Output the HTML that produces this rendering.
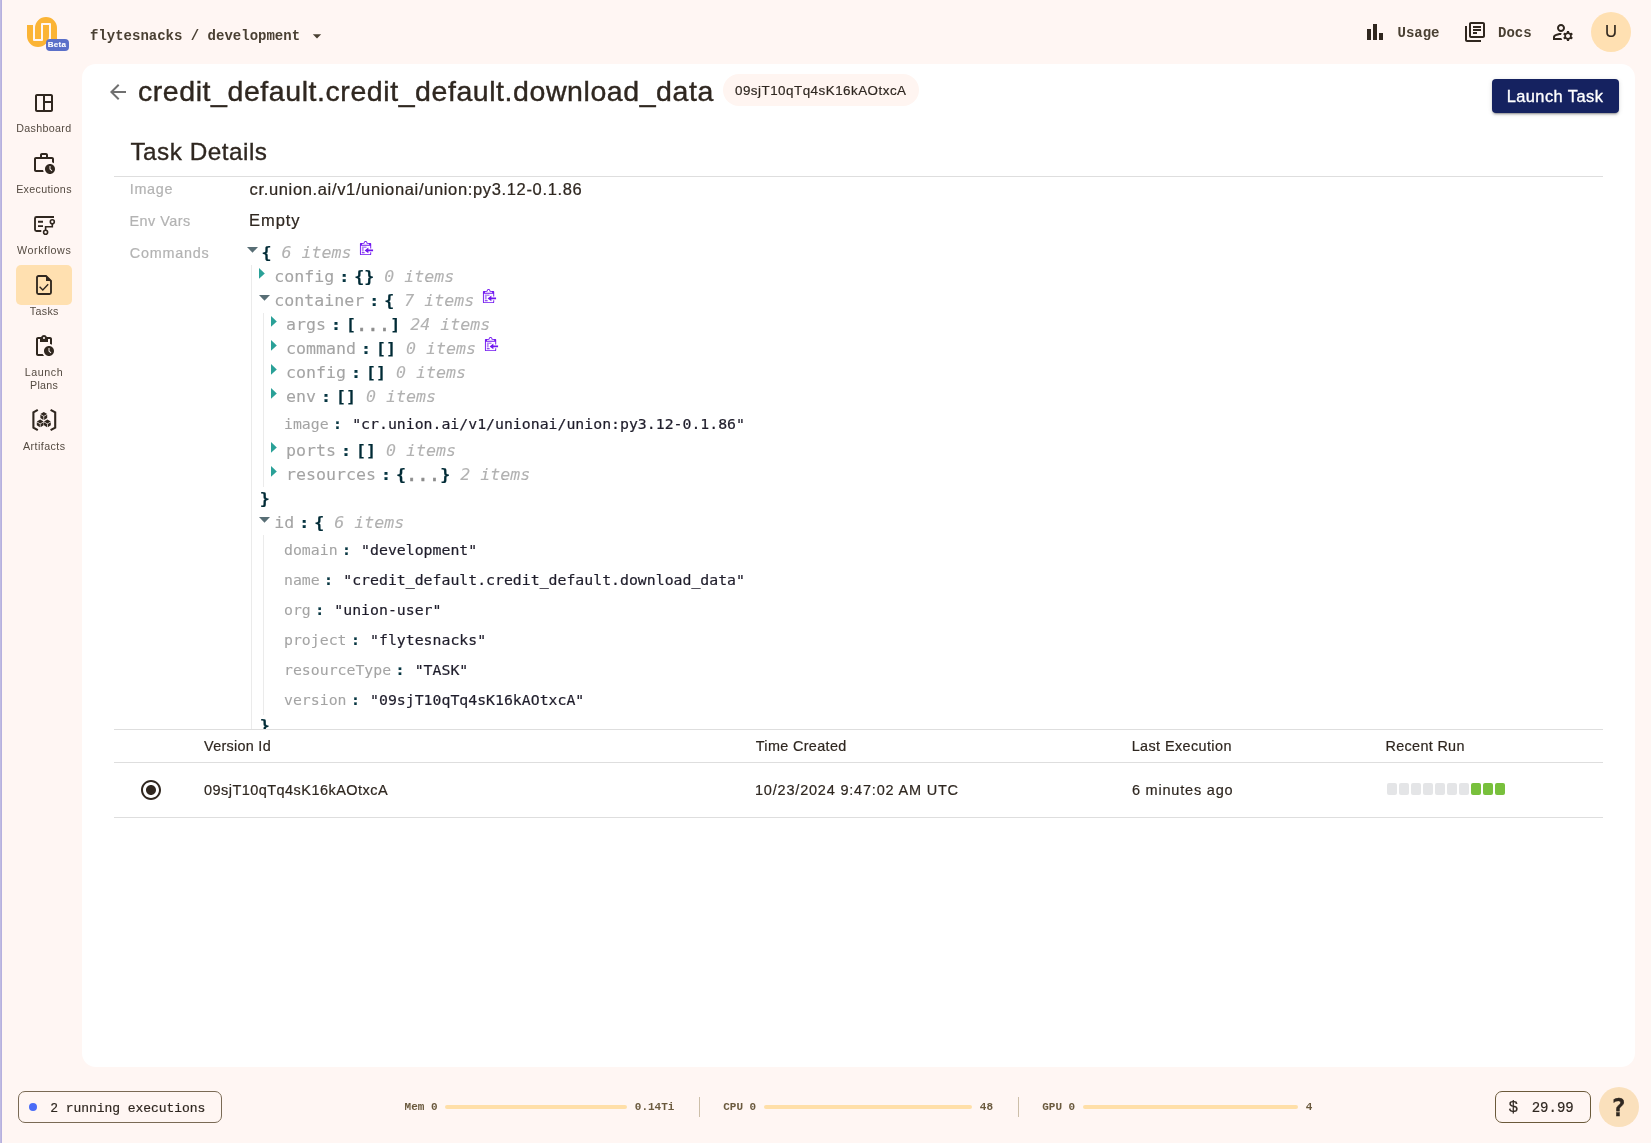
<!DOCTYPE html>
<html lang="en">
<head>
<meta charset="utf-8">
<title>Task Details</title>
<style>
*{box-sizing:border-box;margin:0;padding:0}
html,body{width:1651px;height:1143px;overflow:hidden}
body{background:#fff6f3;font-family:"Liberation Sans",sans-serif;color:#2f2720;position:relative}
.a{position:absolute}
.t{position:absolute;white-space:nowrap;-webkit-text-stroke:0.014em}
svg{position:absolute;overflow:visible}
.hl{position:absolute;height:1px;background:#dedede;left:114px;width:1489px}
.gl{position:absolute;width:1px;background:#ebebeb}
.blk{position:absolute;top:783px;width:10px;height:12px;border-radius:2px;background:#e4e5e7}
.bar{position:absolute;top:1105px;height:4px;border-radius:2px;background:#ffdfa8}
.sep{position:absolute;top:1097px;height:20px;width:1px;background:#cdbfa9}
</style>
</head>
<body>
<div id="app" style="position:absolute;left:0;top:0;width:1651px;height:1143px;will-change:transform">

<div class="a" style="left:0;top:0;width:2px;height:1143px;background:linear-gradient(90deg,#bfbae2 0,#bfbae2 50%,#b6b0de 50%)"></div>
<div class="a" style="left:82px;top:64px;width:1553px;height:1003px;background:#fff;border-radius:14px"></div>
<svg style="left:20px;top:10px" width="55" height="48" viewBox="20 10 55 48">
<path d="M27 25h6v15a1 1 0 0 0 1 1h8a1 1 0 0 0 1-1V25h6v11a11 11 0 0 1-22 0z" fill="#fbb435"/>
<path d="M35 39V28a11 11 0 0 1 22 0v11h-6V24a1 1 0 0 0-1-1h-8a1 1 0 0 0-1 1v15z" fill="#fbb435"/>
</svg>
<div class="a" style="left:46px;top:39px;width:23px;height:12px;border-radius:4px;background:#5b70c9"></div>
<span class="t" style="left:47.80px;top:41.13px;font-size:8px;line-height:8px;color:#fff;font-weight:bold;letter-spacing:0.3px">Beta</span>
<span class="t" style="left:90.00px;top:29.26px;font-size:14px;line-height:14px;color:#4a4033;font-family:'Liberation Mono',monospace;font-weight:bold;-webkit-text-stroke:0">flytesnacks / development</span>
<svg style="left:307px;top:25.5px" width="20" height="20" viewBox="0 0 24 24"><path d="M7 10l5 5 5-5z" fill="#4a4033"/></svg>
<svg style="left:1363px;top:20px" width="24" height="24" viewBox="0 0 24 24"><path d="M4 9h4v11H4zm12 4h4v7h-4zm-6-9h4v16h-4z" fill="#30271f"/></svg>
<span class="t" style="left:1397.50px;top:26.46px;font-size:14px;line-height:14px;color:#4a4033;font-family:'Liberation Mono',monospace;font-weight:bold;-webkit-text-stroke:0">Usage</span>
<svg style="left:1463px;top:20px" width="24" height="24" viewBox="0 0 24 24"><path d="M4 6H2v14c0 1.1.9 2 2 2h14v-2H4V6zm16-4H8c-1.1 0-2 .9-2 2v12c0 1.1.9 2 2 2h12c1.1 0 2-.9 2-2V4c0-1.1-.9-2-2-2zm0 14H8V4h12v12zM10 9h8v2h-8zm0 3h4v2h-4zm0-6h8v2h-8z" fill="#30271f"/></svg>
<span class="t" style="left:1498.00px;top:26.46px;font-size:14px;line-height:14px;color:#4a4033;font-family:'Liberation Mono',monospace;font-weight:bold;-webkit-text-stroke:0">Docs</span>
<svg style="left:1551px;top:20px" width="24" height="24" viewBox="0 0 24 24"><path d="M4 18v-.65c0-.34.16-.66.41-.81C6.1 15.53 8.03 15 10 15c.03 0 .05 0 .08.01.1-.7.3-1.37.59-1.98-.22-.02-.44-.03-.67-.03-2.42 0-4.680.67-6.610 1.820-.88.520-1.390 1.500-1.390 2.530V20h9.260c-.42-.6-.75-1.280-.97-2H4zm6-6c2.210 0 4-1.790 4-4s-1.790-4-4-4-4 1.790-4 4 1.790 4 4 4zm0-6c1.100 0 2 .9 2 2s-.9 2-2 2-2-.9-2-2 .9-2 2-2zm10.750 10c0-.22-.03-.42-.06-.63l1.140-1.010-1-1.730-1.450.49c-.32-.27-.68-.48-1.080-.63L18 11h-2l-.3 1.490c-.4.150-.76.360-1.080.630l-1.450-.49-1 1.730 1.140 1.010c-.03.210-.06.410-.06.630s.03.420.06.630l-1.140 1.010 1 1.730 1.450-.49c.32.270.68.480 1.080.630L16 21h2l.3-1.490c.4-.15.76-.36 1.080-.63l1.450.49 1-1.730-1.140-1.010c.03-.21.06-.41.06-.63zM17 18c-1.100 0-2-.9-2-2s.9-2 2-2 2 .9 2 2-.9 2-2 2z" fill="#30271f"/></svg>
<div class="a" style="left:1591px;top:12px;width:40px;height:40px;border-radius:50%;background:#ffe0b2"></div>
<span class="t" style="left:1604.90px;top:23.95px;font-size:16.6px;line-height:16.6px;color:#30271f">U</span>
<svg style="left:32px;top:90.5px" width="24" height="24" viewBox="0 0 24 24"><path d="M19 3H5c-1.100 0-2 .9-2 2v14c0 1.100.9 2 2 2h14c1.100 0 2-.9 2-2V5c0-1.100-.9-2-2-2zM5 19V5h6v14H5zm14 0h-6v-7h6v7zm0-9h-6V5h6v5z" fill="#30271f"/></svg>
<svg style="left:32px;top:151px" width="24" height="24" viewBox="0 0 24 24"><path d="M4 19V8h16v3.290c.72.220 1.400.540 2 .970V8c0-1.110-.89-2-2-2h-4V4c0-1.110-.89-2-2-2h-4c-1.110 0-2 .89-2 2v2H4c-1.110 0-2 .89-2 2v11c0 1.110.89 2 2 2h7.680c-.3-.62-.5-1.290-.6-2H4zm6-15h4v2h-4V4z" fill="#30271f"/><path d="M18 13c-2.760 0-5 2.240-5 5s2.240 5 5 5 5-2.240 5-5-2.240-5-5-5zm1.650 7.350L17.500 18.200V15h1v2.790l1.850 1.850-.7.710z" fill="#30271f"/></svg>
<svg style="left:32px;top:212px" width="24" height="24" viewBox="0 0 24 24" fill="none" stroke="#30271f">
<path d="M22 5H4.500A1.500 1.500 0 0 0 3 6.500v11A1.500 1.500 0 0 0 4.500 19H9.300" stroke-width="1.850"/>
<path d="M6 9.750h5M6 14.100h5" stroke-width="1.800"/>
<circle cx="20.300" cy="9.700" r="2" stroke-width="1.600"/><circle cx="13.600" cy="20.200" r="2" stroke-width="1.600"/>
<path d="M20.300 11.700v3.100h-6.700v3.400" stroke-width="1.600"/></svg>
<div class="a" style="left:16px;top:265px;width:56px;height:40px;border-radius:5px;background:#ffe0b0"></div>
<svg style="left:32px;top:273px" width="24" height="24" viewBox="0 0 24 24" fill="none" stroke="#30271f">
<path d="M14 3H6.500A1.500 1.500 0 0 0 5 4.500v15A1.500 1.500 0 0 0 6.500 21h11a1.500 1.500 0 0 0 1.500-1.500V8z" stroke-width="1.850" stroke-linejoin="round"/>
<path d="M14 2.500V8h5.500z" fill="#30271f" stroke="none"/>
<path d="M7.600 13.700l3.200 3.200 5.400-5.600" stroke-width="1.400"/></svg>
<svg style="left:31.5px;top:334px" width="24" height="24" viewBox="0 0 24 24"><path d="M17 12c-2.760 0-5 2.240-5 5s2.240 5 5 5 5-2.240 5-5-2.240-5-5-5zm1.650 7.350L16.500 17.200V14h1v2.790l1.850 1.850-.7.710zM18 3h-3.180C14.400 1.840 13.300 1 12 1s-2.400.84-2.820 2H6c-1.100 0-2 .9-2 2v15c0 1.100.9 2 2 2h6.110c-.59-.57-1.070-1.250-1.420-2H6V5h2v3h8V5h2v5.080c.71.100 1.380.31 2 .6V5c0-1.100-.9-2-2-2zm-6 2c-.55 0-1-.45-1-1s.45-1 1-1 1 .45 1 1-.45 1-1 1z" fill="#30271f"/></svg>
<svg style="left:30px;top:406px" width="28" height="28" viewBox="30 406 28 28">
<path d="M37.800 409.800L33.400 412.400V427.600L37.800 430.200M50.600 409.800L55.200 412.400V427.600L50.600 430.200" fill="none" stroke="#30271f" stroke-width="2.100"/>
<path d="M43.8 412.06L47.20 414.03L43.8 416.00L40.40 414.03zM40.40 414.73L43.45 416.60V419.94L40.40 417.97zM47.20 414.73L44.15 416.60V419.94L47.20 417.97zM40.2 419.46L43.60 421.43L40.2 423.40L36.80 421.43zM36.80 422.13L39.85 424.00V427.34L36.80 425.37zM43.60 422.13L40.55 424.00V427.34L43.60 425.37zM47.4 419.46L50.80 421.43L47.4 423.40L44.00 421.43zM44.00 422.13L47.05 424.00V427.34L44.00 425.37zM50.80 422.13L47.75 424.00V427.34L50.80 425.37z" fill="#30271f"/></svg>
<span class="t" style="left:16.15px;top:122.64px;font-size:10.7px;line-height:10.7px;color:#544a41;letter-spacing:0.35px;-webkit-text-stroke:0">Dashboard</span>
<span class="t" style="left:16.15px;top:183.84px;font-size:10.7px;line-height:10.7px;color:#544a41;letter-spacing:0.339px;-webkit-text-stroke:0">Executions</span>
<span class="t" style="left:17.10px;top:244.74px;font-size:10.7px;line-height:10.7px;color:#544a41;letter-spacing:0.569px;-webkit-text-stroke:0">Workflows</span>
<span class="t" style="left:29.75px;top:305.74px;font-size:10.7px;line-height:10.7px;color:#544a41;letter-spacing:0.338px;-webkit-text-stroke:0">Tasks</span>
<span class="t" style="left:24.85px;top:366.74px;font-size:10.7px;line-height:10.7px;color:#544a41;letter-spacing:0.55px;-webkit-text-stroke:0">Launch</span>
<span class="t" style="left:30.05px;top:379.64px;font-size:10.7px;line-height:10.7px;color:#544a41;letter-spacing:0.237px;-webkit-text-stroke:0">Plans</span>
<span class="t" style="left:22.90px;top:440.74px;font-size:10.7px;line-height:10.7px;color:#544a41;letter-spacing:0.456px;-webkit-text-stroke:0">Artifacts</span>
<svg style="left:106.2px;top:80px" width="24" height="24" viewBox="0 0 24 24"><path d="M20 11H7.830l5.590-5.590L12 4l-8 8 8 8 1.410-1.410L7.830 13H20v-2z" fill="#707070"/></svg>
<span class="t" style="left:137.95px;top:77.17px;font-size:28.5px;line-height:28.5px;color:#2f2720;letter-spacing:0.57px">credit_default.credit_default.download_data</span>
<div class="a" style="left:723px;top:74px;width:196px;height:32px;border-radius:16px;background:#fff5f1"></div>
<span class="t" style="left:735.00px;top:84.06px;font-size:13.4px;line-height:13.4px;color:#2f2720;letter-spacing:0.488px">09sjT10qTq4sK16kAOtxcA</span>
<div class="a" style="left:1492px;top:79px;width:127px;height:34px;border-radius:4px;background:#152260;box-shadow:0 3px 1px -2px rgba(0,0,0,.2),0 2px 2px 0 rgba(0,0,0,.14),0 1px 5px 0 rgba(0,0,0,.12)"></div>
<span class="t" style="left:1506.65px;top:88.12px;font-size:16.4px;line-height:16.4px;color:#fff;letter-spacing:0.45px;-webkit-text-stroke:0.35px #fff">Launch Task</span>
<span class="t" style="left:130.40px;top:140.03px;font-size:24.3px;line-height:24.3px;color:#2f2720;letter-spacing:0.514px">Task Details</span>
<div class="hl" style="top:176px"></div>
<span class="t" style="left:129.65px;top:182.11px;font-size:14.4px;line-height:14.4px;color:#b3b3b3;letter-spacing:0.737px">Image</span>
<span class="t" style="left:129.50px;top:214.01px;font-size:14.4px;line-height:14.4px;color:#b3b3b3;letter-spacing:0.5px">Env Vars</span>
<span class="t" style="left:129.75px;top:245.81px;font-size:14.4px;line-height:14.4px;color:#b3b3b3;letter-spacing:0.764px">Commands</span>
<span class="t" style="left:249.55px;top:180.63px;font-size:16.5px;line-height:16.5px;color:#2f2720;letter-spacing:0.651px">cr.union.ai/v1/unionai/union:py3.12-0.1.86</span>
<span class="t" style="left:249.05px;top:212.43px;font-size:16.5px;line-height:16.5px;color:#2f2720;letter-spacing:0.925px">Empty</span>
<div class="a" style="left:240px;top:232px;width:700px;height:497px;overflow:hidden"><div class="a" style="left:-240px;top:-232px;width:1651px;height:1143px">
<svg style="left:247.3px;top:246.7px" width="11" height="6" viewBox="0 0 11 6"><path d="M0 0H11L5.500 5.800z" fill="#586e75"/></svg>
<span class="t" style="left:261.50px;top:244.60px;font-size:16.61px;line-height:16.61px;color:#002b36;font-family:'DejaVu Sans Mono','Liberation Mono',monospace;font-weight:bold">{</span>
<span class="t" style="left:281.50px;top:244.60px;font-size:16.61px;line-height:16.61px;color:rgba(0,0,0,0.3);font-family:'DejaVu Sans Mono','Liberation Mono',monospace;font-style:italic;-webkit-text-stroke:0.006em">6 items</span>
<svg style="left:359.1px;top:241.1px" width="15" height="15" viewBox="0 0 40 40"><path d="m30 35h-25v-22.500h25v7.500h2.500v-12.500c0-1.400-1.100-2.500-2.500-2.500h-7.500c0-2.800-2.200-5-5-5s-5 2.200-5 5h-7.500c-1.400 0-2.500 1.100-2.500 2.500v27.500c0 1.400 1.100 2.500 2.500 2.500h25c1.400 0 2.500-1.100 2.500-2.500v-5h-2.500v5z m-20-27.500h2.500s2.500-1.100 2.500-2.500 1.100-2.500 2.500-2.500 2.500 1.100 2.500 2.500 1.300 2.500 2.500 2.500h2.500s2.500 1.100 2.500 2.500h-20c0-1.500 1.100-2.500 2.500-2.500z m-2.500 20h5v-2.500h-5v2.500z m17.500-5v-5l-10 7.500 10 7.500v-5h12.500v-5h-12.500z m-17.500 10h7.500v-2.500h-7.500v2.500z m12.500-17.500h-12.500v2.500h12.500v-2.500z m-7.500 5h-5v2.500h5v-2.500z" fill="#7016f0" fill-rule="evenodd"/></svg>
<svg style="left:259.1px;top:268.09999999999997px" width="6" height="11" viewBox="0 0 6 11"><path d="M0 0L5.800 5.400L0 10.800z" fill="#2aa198"/></svg>
<span class="t" style="left:274.20px;top:268.60px;font-size:16.61px;line-height:16.61px;color:#a4a4a4;font-family:'DejaVu Sans Mono','Liberation Mono',monospace;-webkit-text-stroke:0.006em">config</span>
<span class="t" style="left:339.20px;top:268.60px;font-size:16.61px;line-height:16.61px;color:#073642;font-family:'DejaVu Sans Mono','Liberation Mono',monospace;font-weight:bold">:</span>
<span class="t" style="left:354.20px;top:268.60px;font-size:16.61px;line-height:16.61px;color:#002b36;font-family:'DejaVu Sans Mono','Liberation Mono',monospace;font-weight:bold">{}</span>
<span class="t" style="left:384.20px;top:268.60px;font-size:16.61px;line-height:16.61px;color:rgba(0,0,0,0.3);font-family:'DejaVu Sans Mono','Liberation Mono',monospace;font-style:italic;-webkit-text-stroke:0.006em">0 items</span>
<svg style="left:259.4px;top:294.7px" width="11" height="6" viewBox="0 0 11 6"><path d="M0 0H11L5.500 5.800z" fill="#586e75"/></svg>
<span class="t" style="left:274.20px;top:292.60px;font-size:16.61px;line-height:16.61px;color:#a4a4a4;font-family:'DejaVu Sans Mono','Liberation Mono',monospace;-webkit-text-stroke:0.006em">container</span>
<span class="t" style="left:369.20px;top:292.60px;font-size:16.61px;line-height:16.61px;color:#073642;font-family:'DejaVu Sans Mono','Liberation Mono',monospace;font-weight:bold">:</span>
<span class="t" style="left:384.20px;top:292.60px;font-size:16.61px;line-height:16.61px;color:#002b36;font-family:'DejaVu Sans Mono','Liberation Mono',monospace;font-weight:bold">{</span>
<span class="t" style="left:404.20px;top:292.60px;font-size:16.61px;line-height:16.61px;color:rgba(0,0,0,0.3);font-family:'DejaVu Sans Mono','Liberation Mono',monospace;font-style:italic;-webkit-text-stroke:0.006em">7 items</span>
<svg style="left:481.8px;top:289.1px" width="15" height="15" viewBox="0 0 40 40"><path d="m30 35h-25v-22.500h25v7.500h2.500v-12.500c0-1.400-1.100-2.500-2.500-2.500h-7.500c0-2.800-2.200-5-5-5s-5 2.200-5 5h-7.500c-1.400 0-2.500 1.100-2.500 2.500v27.500c0 1.400 1.100 2.500 2.500 2.500h25c1.400 0 2.500-1.100 2.500-2.500v-5h-2.500v5z m-20-27.500h2.500s2.500-1.100 2.500-2.500 1.100-2.500 2.500-2.500 2.500 1.100 2.500 2.500 1.300 2.500 2.500 2.500h2.500s2.500 1.100 2.500 2.500h-20c0-1.500 1.100-2.500 2.500-2.500z m-2.500 20h5v-2.500h-5v2.500z m17.500-5v-5l-10 7.500 10 7.500v-5h12.500v-5h-12.500z m-17.500 10h7.500v-2.500h-7.500v2.500z m12.500-17.500h-12.500v2.500h12.500v-2.500z m-7.500 5h-5v2.500h5v-2.500z" fill="#7016f0" fill-rule="evenodd"/></svg>
<svg style="left:271.2px;top:316.09999999999997px" width="6" height="11" viewBox="0 0 6 11"><path d="M0 0L5.800 5.400L0 10.800z" fill="#2aa198"/></svg>
<span class="t" style="left:286.00px;top:316.60px;font-size:16.61px;line-height:16.61px;color:#a4a4a4;font-family:'DejaVu Sans Mono','Liberation Mono',monospace;-webkit-text-stroke:0.006em">args</span>
<span class="t" style="left:331.00px;top:316.60px;font-size:16.61px;line-height:16.61px;color:#073642;font-family:'DejaVu Sans Mono','Liberation Mono',monospace;font-weight:bold">:</span>
<span class="t" style="left:346.00px;top:316.60px;font-size:16.61px;line-height:16.61px;color:#002b36;font-family:'DejaVu Sans Mono','Liberation Mono',monospace;font-weight:bold">[</span>
<span class="t" style="left:356.00px;top:314.66px;font-size:18.9px;line-height:18.9px;color:#8c8c8c;font-family:'DejaVu Sans Mono','Liberation Mono',monospace;-webkit-text-stroke:0.55px">...</span>
<span class="t" style="left:390.20px;top:316.60px;font-size:16.61px;line-height:16.61px;color:#002b36;font-family:'DejaVu Sans Mono','Liberation Mono',monospace;font-weight:bold">]</span>
<span class="t" style="left:410.20px;top:316.60px;font-size:16.61px;line-height:16.61px;color:rgba(0,0,0,0.3);font-family:'DejaVu Sans Mono','Liberation Mono',monospace;font-style:italic;-webkit-text-stroke:0.006em">24 items</span>
<svg style="left:271.2px;top:340.09999999999997px" width="6" height="11" viewBox="0 0 6 11"><path d="M0 0L5.800 5.400L0 10.800z" fill="#2aa198"/></svg>
<span class="t" style="left:286.00px;top:340.60px;font-size:16.61px;line-height:16.61px;color:#a4a4a4;font-family:'DejaVu Sans Mono','Liberation Mono',monospace;-webkit-text-stroke:0.006em">command</span>
<span class="t" style="left:361.00px;top:340.60px;font-size:16.61px;line-height:16.61px;color:#073642;font-family:'DejaVu Sans Mono','Liberation Mono',monospace;font-weight:bold">:</span>
<span class="t" style="left:376.00px;top:340.60px;font-size:16.61px;line-height:16.61px;color:#002b36;font-family:'DejaVu Sans Mono','Liberation Mono',monospace;font-weight:bold">[]</span>
<span class="t" style="left:406.00px;top:340.60px;font-size:16.61px;line-height:16.61px;color:rgba(0,0,0,0.3);font-family:'DejaVu Sans Mono','Liberation Mono',monospace;font-style:italic;-webkit-text-stroke:0.006em">0 items</span>
<svg style="left:483.6px;top:337.1px" width="15" height="15" viewBox="0 0 40 40"><path d="m30 35h-25v-22.500h25v7.500h2.500v-12.500c0-1.400-1.100-2.500-2.500-2.500h-7.500c0-2.800-2.200-5-5-5s-5 2.200-5 5h-7.500c-1.400 0-2.500 1.100-2.500 2.500v27.500c0 1.400 1.100 2.500 2.500 2.500h25c1.400 0 2.500-1.100 2.500-2.500v-5h-2.500v5z m-20-27.500h2.500s2.500-1.100 2.500-2.500 1.100-2.500 2.500-2.500 2.500 1.100 2.500 2.500 1.300 2.500 2.500 2.500h2.500s2.500 1.100 2.500 2.500h-20c0-1.500 1.100-2.500 2.500-2.500z m-2.500 20h5v-2.500h-5v2.500z m17.500-5v-5l-10 7.500 10 7.500v-5h12.500v-5h-12.500z m-17.500 10h7.500v-2.500h-7.500v2.500z m12.500-17.500h-12.500v2.500h12.500v-2.500z m-7.500 5h-5v2.500h5v-2.500z" fill="#7016f0" fill-rule="evenodd"/></svg>
<svg style="left:271.2px;top:364.09999999999997px" width="6" height="11" viewBox="0 0 6 11"><path d="M0 0L5.800 5.400L0 10.800z" fill="#2aa198"/></svg>
<span class="t" style="left:286.00px;top:364.60px;font-size:16.61px;line-height:16.61px;color:#a4a4a4;font-family:'DejaVu Sans Mono','Liberation Mono',monospace;-webkit-text-stroke:0.006em">config</span>
<span class="t" style="left:351.00px;top:364.60px;font-size:16.61px;line-height:16.61px;color:#073642;font-family:'DejaVu Sans Mono','Liberation Mono',monospace;font-weight:bold">:</span>
<span class="t" style="left:366.00px;top:364.60px;font-size:16.61px;line-height:16.61px;color:#002b36;font-family:'DejaVu Sans Mono','Liberation Mono',monospace;font-weight:bold">[]</span>
<span class="t" style="left:396.00px;top:364.60px;font-size:16.61px;line-height:16.61px;color:rgba(0,0,0,0.3);font-family:'DejaVu Sans Mono','Liberation Mono',monospace;font-style:italic;-webkit-text-stroke:0.006em">0 items</span>
<svg style="left:271.2px;top:388.09999999999997px" width="6" height="11" viewBox="0 0 6 11"><path d="M0 0L5.800 5.400L0 10.800z" fill="#2aa198"/></svg>
<span class="t" style="left:286.00px;top:388.60px;font-size:16.61px;line-height:16.61px;color:#a4a4a4;font-family:'DejaVu Sans Mono','Liberation Mono',monospace;-webkit-text-stroke:0.006em">env</span>
<span class="t" style="left:321.00px;top:388.60px;font-size:16.61px;line-height:16.61px;color:#073642;font-family:'DejaVu Sans Mono','Liberation Mono',monospace;font-weight:bold">:</span>
<span class="t" style="left:336.00px;top:388.60px;font-size:16.61px;line-height:16.61px;color:#002b36;font-family:'DejaVu Sans Mono','Liberation Mono',monospace;font-weight:bold">[]</span>
<span class="t" style="left:366.00px;top:388.60px;font-size:16.61px;line-height:16.61px;color:rgba(0,0,0,0.3);font-family:'DejaVu Sans Mono','Liberation Mono',monospace;font-style:italic;-webkit-text-stroke:0.006em">0 items</span>
<span class="t" style="left:284.00px;top:417.10px;font-size:14.83px;line-height:14.83px;color:#a4a4a4;font-family:'DejaVu Sans Mono','Liberation Mono',monospace;-webkit-text-stroke:0.006em">image</span>
<span class="t" style="left:333.05px;top:417.10px;font-size:14.83px;line-height:14.83px;color:#073642;font-family:'DejaVu Sans Mono','Liberation Mono',monospace;font-weight:bold">:</span>
<span class="t" style="left:352.18px;top:417.10px;font-size:14.83px;line-height:14.83px;color:#1f1d2b;font-family:'DejaVu Sans Mono','Liberation Mono',monospace">&quot;cr.union.ai/v1/unionai/union:py3.12-0.1.86&quot;</span>
<svg style="left:271.2px;top:442.0px" width="6" height="11" viewBox="0 0 6 11"><path d="M0 0L5.800 5.400L0 10.800z" fill="#2aa198"/></svg>
<span class="t" style="left:286.00px;top:442.50px;font-size:16.61px;line-height:16.61px;color:#a4a4a4;font-family:'DejaVu Sans Mono','Liberation Mono',monospace;-webkit-text-stroke:0.006em">ports</span>
<span class="t" style="left:341.00px;top:442.50px;font-size:16.61px;line-height:16.61px;color:#073642;font-family:'DejaVu Sans Mono','Liberation Mono',monospace;font-weight:bold">:</span>
<span class="t" style="left:356.00px;top:442.50px;font-size:16.61px;line-height:16.61px;color:#002b36;font-family:'DejaVu Sans Mono','Liberation Mono',monospace;font-weight:bold">[]</span>
<span class="t" style="left:386.00px;top:442.50px;font-size:16.61px;line-height:16.61px;color:rgba(0,0,0,0.3);font-family:'DejaVu Sans Mono','Liberation Mono',monospace;font-style:italic;-webkit-text-stroke:0.006em">0 items</span>
<svg style="left:271.2px;top:466.0px" width="6" height="11" viewBox="0 0 6 11"><path d="M0 0L5.800 5.400L0 10.800z" fill="#2aa198"/></svg>
<span class="t" style="left:286.00px;top:466.50px;font-size:16.61px;line-height:16.61px;color:#a4a4a4;font-family:'DejaVu Sans Mono','Liberation Mono',monospace;-webkit-text-stroke:0.006em">resources</span>
<span class="t" style="left:381.00px;top:466.50px;font-size:16.61px;line-height:16.61px;color:#073642;font-family:'DejaVu Sans Mono','Liberation Mono',monospace;font-weight:bold">:</span>
<span class="t" style="left:396.00px;top:466.50px;font-size:16.61px;line-height:16.61px;color:#002b36;font-family:'DejaVu Sans Mono','Liberation Mono',monospace;font-weight:bold">{</span>
<span class="t" style="left:406.00px;top:464.56px;font-size:18.9px;line-height:18.9px;color:#8c8c8c;font-family:'DejaVu Sans Mono','Liberation Mono',monospace;-webkit-text-stroke:0.55px">...</span>
<span class="t" style="left:440.20px;top:466.50px;font-size:16.61px;line-height:16.61px;color:#002b36;font-family:'DejaVu Sans Mono','Liberation Mono',monospace;font-weight:bold">}</span>
<span class="t" style="left:460.20px;top:466.50px;font-size:16.61px;line-height:16.61px;color:rgba(0,0,0,0.3);font-family:'DejaVu Sans Mono','Liberation Mono',monospace;font-style:italic;-webkit-text-stroke:0.006em">2 items</span>
<span class="t" style="left:259.80px;top:490.50px;font-size:16.61px;line-height:16.61px;color:#002b36;font-family:'DejaVu Sans Mono','Liberation Mono',monospace;font-weight:bold">}</span>
<svg style="left:259.4px;top:516.6px" width="11" height="6" viewBox="0 0 11 6"><path d="M0 0H11L5.500 5.800z" fill="#586e75"/></svg>
<span class="t" style="left:274.20px;top:514.50px;font-size:16.61px;line-height:16.61px;color:#a4a4a4;font-family:'DejaVu Sans Mono','Liberation Mono',monospace;-webkit-text-stroke:0.006em">id</span>
<span class="t" style="left:299.20px;top:514.50px;font-size:16.61px;line-height:16.61px;color:#073642;font-family:'DejaVu Sans Mono','Liberation Mono',monospace;font-weight:bold">:</span>
<span class="t" style="left:314.20px;top:514.50px;font-size:16.61px;line-height:16.61px;color:#002b36;font-family:'DejaVu Sans Mono','Liberation Mono',monospace;font-weight:bold">{</span>
<span class="t" style="left:334.20px;top:514.50px;font-size:16.61px;line-height:16.61px;color:rgba(0,0,0,0.3);font-family:'DejaVu Sans Mono','Liberation Mono',monospace;font-style:italic;-webkit-text-stroke:0.006em">6 items</span>
<span class="t" style="left:284.00px;top:542.90px;font-size:14.83px;line-height:14.83px;color:#a4a4a4;font-family:'DejaVu Sans Mono','Liberation Mono',monospace;-webkit-text-stroke:0.006em">domain</span>
<span class="t" style="left:341.98px;top:542.90px;font-size:14.83px;line-height:14.83px;color:#073642;font-family:'DejaVu Sans Mono','Liberation Mono',monospace;font-weight:bold">:</span>
<span class="t" style="left:361.11px;top:542.90px;font-size:14.83px;line-height:14.83px;color:#1f1d2b;font-family:'DejaVu Sans Mono','Liberation Mono',monospace">&quot;development&quot;</span>
<span class="t" style="left:284.00px;top:572.90px;font-size:14.83px;line-height:14.83px;color:#a4a4a4;font-family:'DejaVu Sans Mono','Liberation Mono',monospace;-webkit-text-stroke:0.006em">name</span>
<span class="t" style="left:324.12px;top:572.90px;font-size:14.83px;line-height:14.83px;color:#073642;font-family:'DejaVu Sans Mono','Liberation Mono',monospace;font-weight:bold">:</span>
<span class="t" style="left:343.25px;top:572.90px;font-size:14.83px;line-height:14.83px;color:#1f1d2b;font-family:'DejaVu Sans Mono','Liberation Mono',monospace">&quot;credit_default.credit_default.download_data&quot;</span>
<span class="t" style="left:284.00px;top:602.90px;font-size:14.83px;line-height:14.83px;color:#a4a4a4;font-family:'DejaVu Sans Mono','Liberation Mono',monospace;-webkit-text-stroke:0.006em">org</span>
<span class="t" style="left:315.19px;top:602.90px;font-size:14.83px;line-height:14.83px;color:#073642;font-family:'DejaVu Sans Mono','Liberation Mono',monospace;font-weight:bold">:</span>
<span class="t" style="left:334.32px;top:602.90px;font-size:14.83px;line-height:14.83px;color:#1f1d2b;font-family:'DejaVu Sans Mono','Liberation Mono',monospace">&quot;union-user&quot;</span>
<span class="t" style="left:284.00px;top:632.90px;font-size:14.83px;line-height:14.83px;color:#a4a4a4;font-family:'DejaVu Sans Mono','Liberation Mono',monospace;-webkit-text-stroke:0.006em">project</span>
<span class="t" style="left:350.91px;top:632.90px;font-size:14.83px;line-height:14.83px;color:#073642;font-family:'DejaVu Sans Mono','Liberation Mono',monospace;font-weight:bold">:</span>
<span class="t" style="left:370.04px;top:632.90px;font-size:14.83px;line-height:14.83px;color:#1f1d2b;font-family:'DejaVu Sans Mono','Liberation Mono',monospace">&quot;flytesnacks&quot;</span>
<span class="t" style="left:284.00px;top:662.90px;font-size:14.83px;line-height:14.83px;color:#a4a4a4;font-family:'DejaVu Sans Mono','Liberation Mono',monospace;-webkit-text-stroke:0.006em">resourceType</span>
<span class="t" style="left:395.56px;top:662.90px;font-size:14.83px;line-height:14.83px;color:#073642;font-family:'DejaVu Sans Mono','Liberation Mono',monospace;font-weight:bold">:</span>
<span class="t" style="left:414.69px;top:662.90px;font-size:14.83px;line-height:14.83px;color:#1f1d2b;font-family:'DejaVu Sans Mono','Liberation Mono',monospace">&quot;TASK&quot;</span>
<span class="t" style="left:284.00px;top:692.90px;font-size:14.83px;line-height:14.83px;color:#a4a4a4;font-family:'DejaVu Sans Mono','Liberation Mono',monospace;-webkit-text-stroke:0.006em">version</span>
<span class="t" style="left:350.91px;top:692.90px;font-size:14.83px;line-height:14.83px;color:#073642;font-family:'DejaVu Sans Mono','Liberation Mono',monospace;font-weight:bold">:</span>
<span class="t" style="left:370.04px;top:692.90px;font-size:14.83px;line-height:14.83px;color:#1f1d2b;font-family:'DejaVu Sans Mono','Liberation Mono',monospace">&quot;09sjT10qTq4sK16kAOtxcA&quot;</span>
<span class="t" style="left:259.80px;top:718.30px;font-size:16.61px;line-height:16.61px;color:#002b36;font-family:'DejaVu Sans Mono','Liberation Mono',monospace;font-weight:bold">}</span>
<div class="gl" style="left:251px;top:265px;height:470px"></div>
<div class="gl" style="left:263px;top:313px;height:173.5px"></div>
<div class="gl" style="left:263px;top:535px;height:179.5px"></div>
</div></div>
<div class="hl" style="top:729px"></div>
<div class="hl" style="top:762px"></div>
<div class="hl" style="top:817px"></div>
<span class="t" style="left:204.10px;top:739.11px;font-size:14.4px;line-height:14.4px;color:#2f2720;letter-spacing:0.283px">Version Id</span>
<span class="t" style="left:755.75px;top:739.11px;font-size:14.4px;line-height:14.4px;color:#2f2720;letter-spacing:0.355px">Time Created</span>
<span class="t" style="left:1131.70px;top:739.11px;font-size:14.4px;line-height:14.4px;color:#2f2720;letter-spacing:0.408px">Last Execution</span>
<span class="t" style="left:1385.50px;top:739.11px;font-size:14.4px;line-height:14.4px;color:#2f2720;letter-spacing:0.328px">Recent Run</span>
<svg style="left:139px;top:778px" width="24" height="24" viewBox="0 0 24 24"><path d="M12 7c-2.760 0-5 2.240-5 5s2.240 5 5 5 5-2.240 5-5-2.240-5-5-5zm0-5C6.480 2 2 6.480 2 12s4.480 10 10 10 10-4.480 10-10S17.520 2 12 2zm0 18c-4.420 0-8-3.580-8-8s3.580-8 8-8 8 3.580 8 8-3.580 8-8 8z" fill="#30271f"/></svg>
<span class="t" style="left:204.00px;top:782.73px;font-size:14.5px;line-height:14.5px;color:#2f2720;letter-spacing:0.452px">09sjT10qTq4sK16kAOtxcA</span>
<span class="t" style="left:755.00px;top:782.73px;font-size:14.5px;line-height:14.5px;color:#2f2720;letter-spacing:0.802px">10/23/2024 9:47:02 AM UTC</span>
<span class="t" style="left:1131.95px;top:782.73px;font-size:14.5px;line-height:14.5px;color:#2f2720;letter-spacing:0.796px">6 minutes ago</span>
<div class="blk" style="left:1387px"></div>
<div class="blk" style="left:1399px"></div>
<div class="blk" style="left:1411px"></div>
<div class="blk" style="left:1423px"></div>
<div class="blk" style="left:1435px"></div>
<div class="blk" style="left:1447px"></div>
<div class="blk" style="left:1459px"></div>
<div class="blk" style="left:1471px;background:#78c03c"></div>
<div class="blk" style="left:1483px;background:#78c03c"></div>
<div class="blk" style="left:1495px;background:#78c03c"></div>
<div class="a" style="left:18px;top:1091px;width:204px;height:32px;border:1px solid #7a6a55;border-radius:7px"></div>
<div class="a" style="left:29px;top:1103px;width:8.400px;height:8.400px;border-radius:50%;background:#4a6cf7"></div>
<span class="t" style="left:50.15px;top:1102.23px;font-size:13px;line-height:13px;color:#2f2720;font-family:'Liberation Mono',monospace;letter-spacing:-0.039px">2 running executions</span>
<span class="t" style="left:404.60px;top:1102.47px;font-size:11px;line-height:11px;color:#6b5a3e;font-family:'Liberation Mono',monospace;font-weight:bold;-webkit-text-stroke:0">Mem 0</span>
<div class="bar" style="left:445px;width:182px"></div>
<span class="t" style="left:634.80px;top:1102.47px;font-size:11px;line-height:11px;color:#6b5a3e;font-family:'Liberation Mono',monospace;font-weight:bold;-webkit-text-stroke:0">0.14Ti</span>
<div class="sep" style="left:699px"></div>
<span class="t" style="left:723.20px;top:1102.47px;font-size:11px;line-height:11px;color:#6b5a3e;font-family:'Liberation Mono',monospace;font-weight:bold;-webkit-text-stroke:0">CPU 0</span>
<div class="bar" style="left:764px;width:208px"></div>
<span class="t" style="left:979.80px;top:1102.47px;font-size:11px;line-height:11px;color:#6b5a3e;font-family:'Liberation Mono',monospace;font-weight:bold;-webkit-text-stroke:0">48</span>
<div class="sep" style="left:1018px"></div>
<span class="t" style="left:1042.20px;top:1102.47px;font-size:11px;line-height:11px;color:#6b5a3e;font-family:'Liberation Mono',monospace;font-weight:bold;-webkit-text-stroke:0">GPU 0</span>
<div class="bar" style="left:1083px;width:215px"></div>
<span class="t" style="left:1305.80px;top:1102.47px;font-size:11px;line-height:11px;color:#6b5a3e;font-family:'Liberation Mono',monospace;font-weight:bold;-webkit-text-stroke:0">4</span>
<div class="a" style="left:1495px;top:1091px;width:96px;height:32px;border:1px solid #6b5a3a;border-radius:7px"></div>
<span class="t" style="left:1508.50px;top:1099.73px;font-size:16px;line-height:16px;color:#2f2720;font-family:'Liberation Mono',monospace">$</span>
<span class="t" style="left:1531.70px;top:1100.86px;font-size:14px;line-height:14px;color:#2f2720;font-family:'Liberation Mono',monospace">29.99</span>
<div class="a" style="left:1599px;top:1087px;width:40px;height:40px;border-radius:50%;background:#fae0bc"></div>
<span class="t" style="left:1611.05px;top:1095.72px;font-size:24.8px;line-height:24.8px;color:#2f2720;font-family:'DejaVu Sans Mono','Liberation Mono',monospace;font-weight:bold">?</span>
</div>
</body>
</html>
